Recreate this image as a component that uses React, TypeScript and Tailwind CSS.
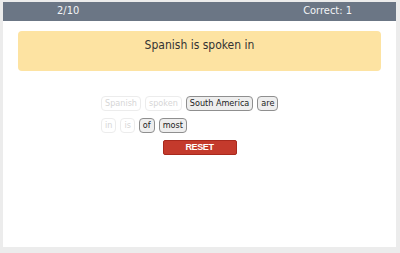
const font = { fontFamily: '"DejaVu Sans Condensed", "DejaVu Sans", Verdana, sans-serif' }

interface Chip {
  label: string
  used?: boolean
}

const rowOne: Chip[] = [
  { label: "Spanish", used: true },
  { label: "spoken", used: true },
  { label: "South America" },
  { label: "are" },
]

const rowTwo: Chip[] = [
  { label: "in", used: true },
  { label: "is", used: true },
  { label: "of" },
  { label: "most" },
]

function WordChip({ chip }: { chip: Chip }) {
  return (
    <span
      className={
        chip.used
          ? "h-[15px] px-[3px] flex items-center rounded-[4px] border border-[#ececec] text-[#d6d6d6] text-[9px] leading-none bg-white"
          : "h-[15px] px-[3px] flex items-center rounded-[4px] border border-[#8f8f8f] text-[#222] text-[9px] leading-none bg-[#eeeeee]"
      }
    >
      {chip.label}
    </span>
  )
}

export default function App() {
  return (
    <div className="w-[400px] h-[253px] bg-[#ececec] pt-[2px] pl-[3px] pr-[4px] pb-[6px]" style={font}>
      <div className="h-full bg-white flex flex-col">
        <div className="h-[19px] bg-[#6b7685] text-[#f3f4f6] text-[11px] flex items-center justify-between pl-[54px] pr-[44px]">
          <span>2/10</span>
          <span>Correct: 1</span>
        </div>
        <div className="mx-[15px] mt-[10px] h-[40px] rounded-[4px] bg-[#fde3a2] text-[#333] text-[12px] text-center pt-[5px]">
          Spanish is spoken in
        </div>
        <div className="mt-[25px] ml-[98px] w-[190px] flex flex-col gap-[7px]">
          <div className="flex gap-[4px]">
            {rowOne.map((c) => (
              <WordChip key={c.label} chip={c} />
            ))}
          </div>
          <div className="flex gap-[4px]">
            {rowTwo.map((c) => (
              <WordChip key={c.label} chip={c} />
            ))}
          </div>
        </div>
        <div className="flex justify-center mt-[7px]">
          <button
            className="w-[74px] h-[15px] bg-[#c43a2c] border border-[#a8291d] rounded-[2px] text-white text-[9px] font-bold tracking-[-0.4px] leading-none flex items-center justify-center"
            style={{ fontFamily: '"Liberation Sans", Arial, sans-serif' }}
          >
            RESET
          </button>
        </div>
      </div>
    </div>
  )
}
